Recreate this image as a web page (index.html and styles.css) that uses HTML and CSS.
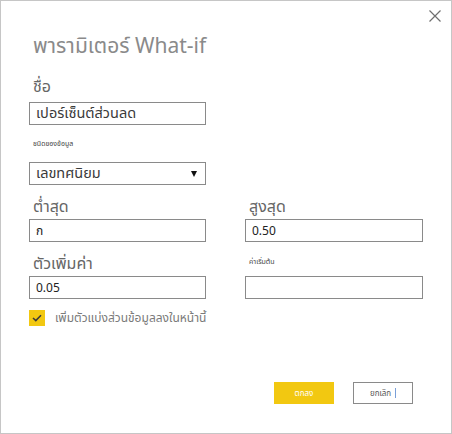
FILE: index.html
```html
<!DOCTYPE html>
<html lang="th">
<head>
<meta charset="utf-8">
<link rel="stylesheet" href="styles.css">
</head>
<body>
<div class="dialog">
  <button class="close" aria-label="close">
    <svg width="12" height="12" viewBox="0 0 12 12"><path d="M0.5 0.5 L11.5 11.5 M11.5 0.5 L0.5 11.5" stroke="#6f6f6f" stroke-width="1.2" fill="none"/></svg>
  </button>
  <h1 class="title">พารามิเตอร์ What-if</h1>

  <div class="field name">
    <div class="label big">ชื่อ</div>
    <div class="input"><span class="val big-val">เปอร์เซ็นต์ส่วนลด</span></div>
  </div>

  <div class="field type">
    <div class="label tiny">ชนิดของข้อมูล</div>
    <div class="input select"><span class="val big-val">เลขทศนิยม</span><span class="arrow"></span></div>
  </div>

  <div class="grid">
    <div class="field">
      <div class="label big">ต่ำสุด</div>
      <div class="input"><span class="val">ก</span></div>
    </div>
    <div class="field">
      <div class="label big">สูงสุด</div>
      <div class="input"><span class="val">0.50</span></div>
    </div>
    <div class="field">
      <div class="label big">ตัวเพิ่มค่า</div>
      <div class="input"><span class="val">0.05</span></div>
    </div>
    <div class="field">
      <div class="label tiny low">ค่าเริ่มต้น</div>
      <div class="input"></div>
    </div>
  </div>

  <div class="check-row">
    <span class="checkbox">
      <svg width="10" height="8" viewBox="0 0 10 8"><path d="M1 4 L3.8 6.6 L9 1.2" stroke="#3a3a3a" stroke-width="1.5" fill="none"/></svg>
    </span>
    <span class="check-label">เพิ่มตัวแบ่งส่วนข้อมูลลงในหน้านี้</span>
  </div>

  <div class="buttons">
    <button class="btn ok">ตกลง</button>
    <button class="btn cancel">ยกเลิก <span class="caret"></span></button>
  </div>
</div>
</body>
</html>
```
FILE: styles.css
```css
html, body {
  margin: 0;
  padding: 0;
  background: #ffffff;
}
body {
  font-family: "Segoe UI", "Noto Sans", "Noto Sans Thai", sans-serif;
}
.dialog {
  position: relative;
  width: 452px;
  height: 434px;
  box-sizing: border-box;
  border: 1px solid #c6c6c6;
  padding: 0 28px 0 28px;
  display: flex;
  flex-direction: column;
}
.close {
  position: absolute;
  top: 8px;
  right: 9px;
  width: 14px;
  height: 14px;
  padding: 1px;
  border: 0;
  background: transparent;
  display: flex;
}
.title {
  margin: 30px 0 0 4px;
  font-size: 21px;
  font-weight: normal;
  color: #8a8a8a;
  line-height: 28px;
}
.field {
  display: flex;
  flex-direction: column;
}
.label {
  margin-left: 4px;
  color: #666666;
}
.big {
  font-size: 16px;
  line-height: 22px;
  margin-top: 10px;
  margin-bottom: 2px;
}
.name .big {
  margin-top: 16px;
  margin-bottom: 5px;
}
.tiny {
  font-size: 7px;
  line-height: 10px;
  margin-top: 14px;
  margin-bottom: 13px;
  color: #444444;
}
.input {
  width: 177px;
  height: 23px;
  box-sizing: border-box;
  border: 1px solid #8a8a8a;
  display: flex;
  align-items: center;
  padding: 0 6px;
}
.val {
  font-size: 12px;
  color: #222222;
}
.big-val {
  font-size: 14.5px;
  color: #3a3a3a;
}
.select {
  justify-content: space-between;
}
.arrow {
  width: 0;
  height: 0;
  border-left: 3px solid transparent;
  border-right: 3px solid transparent;
  border-top: 6px solid #111111;
  margin-right: 2px;
}
.grid {
  display: grid;
  grid-template-columns: 177px 178px;
  column-gap: 39px;
}
.grid .field {
  justify-content: flex-end;
}
.grid .input {
  width: auto;
}
.low {
  margin-top: 0;
  margin-bottom: 9px;
}
.check-row {
  display: flex;
  align-items: center;
  margin-top: 10px;
  gap: 10px;
}
.checkbox {
  width: 16px;
  height: 16px;
  background: #f2c811;
  display: flex;
  align-items: center;
  justify-content: center;
}
.check-label {
  font-size: 12px;
  color: #7a7a7a;
}
.buttons {
  margin-top: auto;
  margin-bottom: 29px;
  display: flex;
  justify-content: flex-end;
  gap: 19px;
  padding-right: 10px;
}
.btn {
  width: 60px;
  height: 22px;
  box-sizing: border-box;
  font-family: inherit;
  font-size: 8px;
  padding: 0;
  display: flex;
  align-items: center;
  justify-content: center;
}
.ok {
  background: #f2c811;
  border: 0;
  color: #ffffff;
}
.cancel {
  background: #ffffff;
  border: 1px solid #8a8a8a;
  color: #555555;
  gap: 4px;
}
.caret {
  width: 1px;
  height: 10px;
  background: #7a9fd8;
}
```
